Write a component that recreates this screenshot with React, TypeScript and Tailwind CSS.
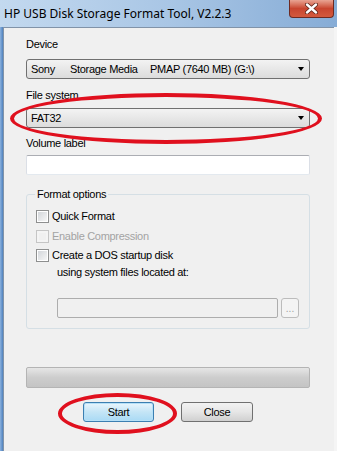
const label = "text-[11px] leading-[13px] tracking-[-0.3px] text-black";

function ComboBox({ parts }: { parts: { text: string; w?: string }[] }) {
  return (
    <div className="flex h-[20px] w-[284px] items-center rounded-[3px] border border-[#707070] bg-gradient-to-b from-[#f3f3f3] to-[#dcdcdc] pl-[4px] pr-[5px]">
      <div className="flex flex-1">
        {parts.map((p) => (
          <span key={p.text} className={`${label} whitespace-pre ${p.w ?? ""}`}>
            {p.text}
          </span>
        ))}
      </div>
      <span className="h-0 w-0 border-x-[3.5px] border-t-[4px] border-x-transparent border-t-black" />
    </div>
  );
}

function CheckRow({ text, disabled }: { text: string; disabled?: boolean }) {
  return (
    <div className="flex h-[13px] items-center gap-[3px]">
      <span
        className={
          disabled
            ? "h-[13px] w-[13px] border border-[#c5c5c5] bg-[#f4f4f4] p-[2px]"
            : "h-[13px] w-[13px] border border-[#8e8f8f] bg-white p-[1px]"
        }
      >
        <span
          className={
            disabled
              ? "block h-full w-full bg-[#f0f0f0]"
              : "block h-full w-full bg-gradient-to-br from-[#d3d6da] to-[#f6f6f6]"
          }
        />
      </span>
      <span
        className={
          disabled
            ? "text-[11px] leading-[13px] tracking-[-0.3px] text-[#a3a3a3]"
            : label
        }
      >
        {text}
      </span>
    </div>
  );
}

export default function App() {
  return (
    <div
      className="relative h-[451px] w-[337px] overflow-hidden bg-[#f0f0f0]"
      style={{ fontFamily: '"Liberation Sans", Arial, sans-serif' }}
    >
      {/* title bar */}
      <div className="flex h-[27px] items-start bg-gradient-to-r from-[#c3d9ef] via-[#a9c6e5] to-[#86acd6]">
        <span
          className="pl-[4px] pt-[6px] text-[12px] leading-[15px] text-black"
          style={{ fontFamily: '"Noto Sans", "Open Sans", sans-serif' }}
        >
          HP USB Disk Storage Format Tool, V2.2.3
        </span>
        <div className="ml-auto mr-[3px] flex h-[18px] w-[45px] items-center justify-center rounded-b-[4px] border border-t-0 border-[#6d2a22] bg-gradient-to-b from-[#e8a493] via-[#c8452f] to-[#d3593d]">
          <svg width="13" height="11" viewBox="0 0 13 11">
            <path d="M2 1.5 L11 9.5 M11 1.5 L2 9.5" stroke="#5a2318" strokeWidth="4" strokeLinecap="round" />
            <path d="M2 1.5 L11 9.5 M11 1.5 L2 9.5" stroke="#ffffff" strokeWidth="2.4" strokeLinecap="round" />
          </svg>
        </div>
      </div>

      <div className="flex h-[424px]">
        <div className="w-[3px] bg-gradient-to-r from-[#8cb2de] to-[#4f82bf]" />
        <div className="flex-1 border-l border-t border-[#8193a8] pl-[22px] pt-[10px]">
          <div className={label}>Device</div>
          <div className="mt-[8px]">
            <ComboBox
              parts={[
                { text: "Sony", w: "w-[39px]" },
                { text: "Storage Media", w: "w-[80px]" },
                { text: "PMAP (7640 MB) (G:\\)" },
              ]}
            />
          </div>

          <div className={`${label} mt-[10px]`}>File system</div>
          <div className="mt-[6px]">
            <ComboBox parts={[{ text: "FAT32" }]} />
          </div>

          <div className={`${label} mt-[9px]`}>Volume label</div>
          <div className="mt-[5px] h-[20px] w-[284px] rounded-[2px] border border-[#abadb3] border-x-[#dbdfe6] border-b-[#e3e9ef] bg-white" />

          <fieldset className="mt-[13px] h-[141px] w-[284px] rounded-[3px] border border-[#d5dfe5] pl-[9px]">
            <legend className={`${label} ml-[-1px] px-[2px]`}>Format options</legend>
            <div className="mt-[9px] flex flex-col">
              <CheckRow text="Quick Format" />
              <div className="mt-[7px]">
                <CheckRow text="Enable Compression" disabled />
              </div>
              <div className="mt-[6px]">
                <CheckRow text="Create a DOS startup disk" />
              </div>
              <div className={`${label} ml-[21px] mt-[4px]`}>using system files located at:</div>
              <div className="ml-[21px] mt-[19px] flex gap-[3px]">
                <div className="h-[20px] w-[221px] rounded-[2px] border border-[#adadad] bg-[#f0f0f0]" />
                <div className="flex h-[20px] w-[18px] items-end justify-center rounded-[3px] border border-[#bcbcbc] bg-[#f4f4f4] pb-[3px] text-[10px] leading-[10px] text-[#a0a0a0]">
                  ...
                </div>
              </div>
            </div>
          </fieldset>

          <div className="mt-[38px] h-[21px] w-[284px] rounded-[2px] border border-[#b4b4b4] bg-gradient-to-b from-[#e6e6e6] via-[#cdcdcd] to-[#c4c4c4]" />

          <div className="ml-[57px] mt-[14px] flex gap-[27px]">
            <div className={`${label} flex h-[20px] w-[71px] items-center justify-center rounded-[3px] border border-[#3c7fb1] bg-gradient-to-b from-[#eaf6fd] via-[#c4e5f6] to-[#a9daf5] shadow-[inset_0_0_0_1px_#b6e0f7]`}>
              Start
            </div>
            <div className={`${label} flex h-[20px] w-[72px] items-center justify-center rounded-[3px] border border-[#707070] bg-gradient-to-b from-[#f2f2f2] via-[#e6e6e6] to-[#d0d0d0]`}>
              Close
            </div>
          </div>
        </div>
        <div className="w-[3px] bg-[#f5f5f5]" />
      </div>

      {/* red annotation ellipses */}
      <div className="pointer-events-none absolute left-[10px] top-[93px] h-[51px] w-[312px] rounded-[50%] border-[4px] border-[#e0101e]" />
      <div className="pointer-events-none absolute left-[58px] top-[393px] h-[41px] w-[119px] rounded-[50%] border-[4px] border-[#e0101e]" />
    </div>
  );
}
